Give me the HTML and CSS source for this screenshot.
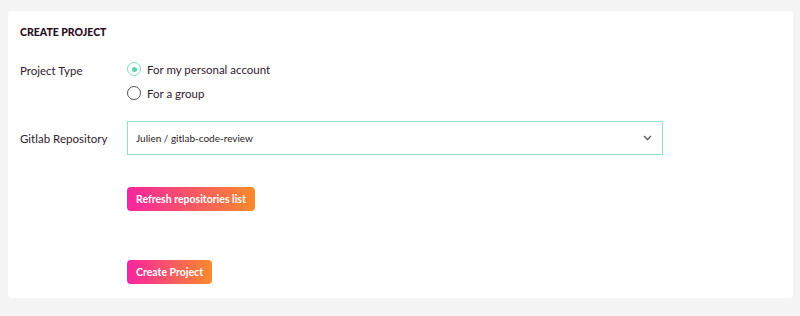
FILE: index.html
```html
<!doctype html>
<html lang="en">
<head>
    <meta charset="UTF-8">
    <title>Create Project</title>
    <link rel="stylesheet" href="styles.css">
</head>
<body>
<div class="card">
    <h2 class="title">CREATE PROJECT</h2>

    <form action="">
        <div class="row row-type">
            <div class="label">Project Type</div>
            <div class="field">
                <label class="radio"><input type="radio" name="type" checked> <span>For my personal account</span></label>
                <label class="radio"><input type="radio" name="type"> <span>For a group</span></label>
            </div>
        </div>

        <div class="row row-repo">
            <label class="label" for="repo">Gitlab Repository</label>
            <div class="field">
                <div class="select" id="repo">
                    <span>Julien / gitlab-code-review</span>
                    <svg width="9" height="6" viewBox="0 0 9 6"><path d="M1 1l3.5 3.5L8 1" fill="none" stroke="#555" stroke-width="1.3"/></svg>
                </div>
            </div>
        </div>

        <div class="row row-refresh">
            <div class="label"></div>
            <div class="field">
                <button type="button" class="btn">Refresh repositories list</button>
            </div>
        </div>

        <div class="row row-submit">
            <div class="label"></div>
            <div class="field">
                <button type="submit" class="btn">Create Project</button>
            </div>
        </div>
    </form>
</div>
</body>
</html>
```

FILE: styles.css
```css
body {
    margin: 0;
    padding: 11px 7px 18px 8px;
    background: #f4f4f4;
    font-family: Lato, "Liberation Sans", sans-serif;
    color: #33202f;
}

.card {
    background: #fff;
    border-radius: 4px;
    padding: 14px 12px 14px 12px;
    height: 259px;
}

.title {
    margin: 0;
    font-size: 10.5px;
    line-height: 14px;
    font-weight: 900;
    color: #2a0c25;
}

.row {
    display: flex;
}

.label {
    width: 107px;
    flex: none;
    font-size: 11.5px;
}

.row-type {
    margin-top: 18px;
}

.row-type .label {
    padding-top: 5px;
    line-height: 18px;
}

.radio {
    display: flex;
    align-items: center;
    height: 24px;
    font-size: 11.5px;
}

.radio input {
    appearance: none;
    -webkit-appearance: none;
    width: 14px;
    height: 14px;
    margin: 0 6px 0 0;
    border: 1px solid #555;
    border-radius: 50%;
    box-sizing: border-box;
    position: relative;
}

.radio input:checked {
    border-color: #7fdcbf;
}

.radio input:checked::after {
    content: "";
    position: absolute;
    left: 3.5px;
    top: 3.5px;
    width: 5px;
    height: 5px;
    border-radius: 50%;
    background: #5fd3ad;
}

.row-repo {
    margin-top: 16px;
    align-items: center;
}

.select {
    width: 536px;
    height: 34px;
    box-sizing: border-box;
    border: 1px solid #8fe2c7;
    display: flex;
    align-items: center;
    justify-content: space-between;
    padding: 0 10px 0 8px;
    font-size: 10px;
    color: #2a1a26;
}

.row-refresh {
    margin-top: 32px;
}

.row-submit {
    margin-top: 49px;
}

.btn {
    border: 0;
    border-radius: 4px;
    height: 24px;
    padding: 0 9px;
    background: linear-gradient(90deg, #f7249f, #f88a2b);
    color: #fff;
    font-family: Lato, "Liberation Sans", sans-serif;
    font-size: 10.5px;
    font-weight: 700;
}
```
